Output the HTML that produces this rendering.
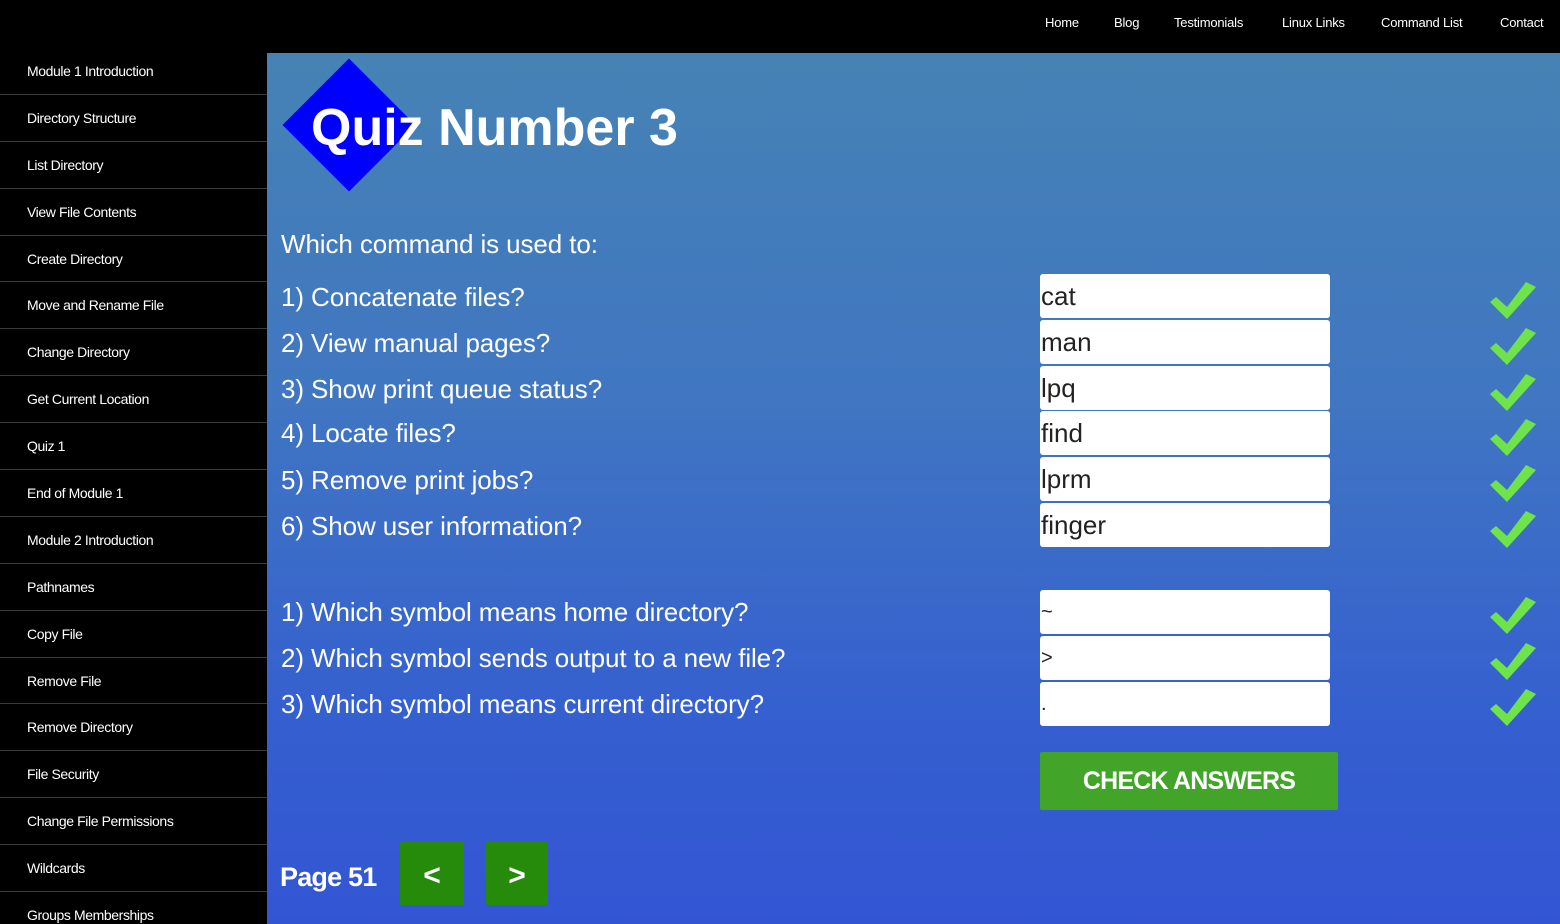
<!DOCTYPE html>
<html><head><meta charset="utf-8"><style>
*{margin:0;padding:0;box-sizing:border-box}
html,body{width:1560px;height:924px;overflow:hidden}
body{background:#000;font-family:"Liberation Sans",sans-serif;position:relative}
.top{position:absolute;left:0;top:0;width:1560px;height:53px;background:#000}
.top a{position:absolute;top:15px;color:#fff;font-size:13px;text-decoration:none;letter-spacing:-0.2px}
.side{position:absolute;left:0;top:48px;width:267px;height:876px;overflow:hidden}
.side div{height:46.9px;border-bottom:1px solid #3a3a3a;color:#fff;font-size:14px;padding:15px 0 0 27px;letter-spacing:-0.4px}
.main{position:absolute;left:267px;top:53px;width:1293px;height:871px;background:linear-gradient(#4682b4,#4076c2 40%,#3560cf 75%,#3355d4)}
.q{position:absolute;left:281px;color:#fff;font-size:26px;letter-spacing:-0.1px;line-height:30px}
.in{position:absolute;left:1040px;width:290px;height:44px;background:#fff;border-radius:3px;color:#222;font-size:26px;padding:6px 1px;line-height:32px}
.ck{position:absolute;left:1480px;width:70px;height:50px}
.btn{position:absolute;background:#268a0a;color:#fff;font-weight:bold;font-size:30px;text-align:center;line-height:68px;border-radius:2px}
</style></head><body>
<div class="top">
<a style="left:1045px">Home</a><a style="left:1114px">Blog</a><a style="left:1174px">Testimonials</a><a style="left:1282px">Linux Links</a><a style="left:1381px">Command List</a><a style="left:1500px">Contact</a>
</div>
<div class="main"></div>
<div class="side">
<div>Module 1 Introduction</div><div>Directory Structure</div><div>List Directory</div><div>View File Contents</div><div>Create Directory</div><div>Move and Rename File</div><div>Change Directory</div><div>Get Current Location</div><div>Quiz 1</div><div>End of Module 1</div><div>Module 2 Introduction</div><div>Pathnames</div><div>Copy File</div><div>Remove File</div><div>Remove Directory</div><div>File Security</div><div>Change File Permissions</div><div>Wildcards</div><div>Groups Memberships</div>
</div>
<div style="position:absolute;left:302px;top:78px;width:94px;height:94px;background:#0000ff;transform:rotate(45deg)"></div>
<div style="position:absolute;left:311px;top:98px;color:#fff;font-weight:bold;font-size:52px;line-height:60px">Quiz Number 3</div>
<div class="q" style="top:229px">Which command is used to:</div>
<div class="q" style="top:282px">1) Concatenate files?</div>
<div class="q" style="top:328px">2) View manual pages?</div>
<div class="q" style="top:374px">3) Show print queue status?</div>
<div class="q" style="top:418px">4) Locate files?</div>
<div class="q" style="top:465px">5) Remove print jobs?</div>
<div class="q" style="top:511px">6) Show user information?</div>
<div class="q" style="top:597px">1) Which symbol means home directory?</div>
<div class="q" style="top:643px">2) Which symbol sends output to a new file?</div>
<div class="q" style="top:689px">3) Which symbol means current directory?</div>
<div class="in" style="top:274px">cat</div>
<div class="in" style="top:320px">man</div>
<div class="in" style="top:366px">lpq</div>
<div class="in" style="top:411px">find</div>
<div class="in" style="top:457px">lprm</div>
<div class="in" style="top:503px">finger</div>
<div class="in" style="top:590px;font-size:20px">~</div>
<div class="in" style="top:636px;font-size:20px">&gt;</div>
<div class="in" style="top:682px;font-size:20px">.</div>
<svg width="0" height="0" style="position:absolute"><defs><symbol id="c" viewBox="0 0 70 50"><polygon points="10,27 16,22 27,32 46,7 56,12 27,44" fill="#6ee34a"/></symbol></defs></svg>
<svg class="ck" style="top:275px"><use href="#c"/></svg>
<svg class="ck" style="top:321px"><use href="#c"/></svg>
<svg class="ck" style="top:367px"><use href="#c"/></svg>
<svg class="ck" style="top:412px"><use href="#c"/></svg>
<svg class="ck" style="top:458px"><use href="#c"/></svg>
<svg class="ck" style="top:504px"><use href="#c"/></svg>
<svg class="ck" style="top:590px"><use href="#c"/></svg>
<svg class="ck" style="top:636px"><use href="#c"/></svg>
<svg class="ck" style="top:682px"><use href="#c"/></svg>
<div class="btn" style="left:1040px;top:752px;width:298px;height:58px;background:#42a52a;font-size:25px;line-height:58px;letter-spacing:-0.8px">CHECK ANSWERS</div>
<div style="position:absolute;left:280px;top:862px;color:#fff;font-weight:bold;font-size:27px;letter-spacing:-0.8px">Page 51</div>
<div class="btn" style="left:400px;top:842px;width:64px;height:63px">&lt;</div>
<div class="btn" style="left:486px;top:842px;width:62px;height:63px">&gt;</div>
</body></html>
